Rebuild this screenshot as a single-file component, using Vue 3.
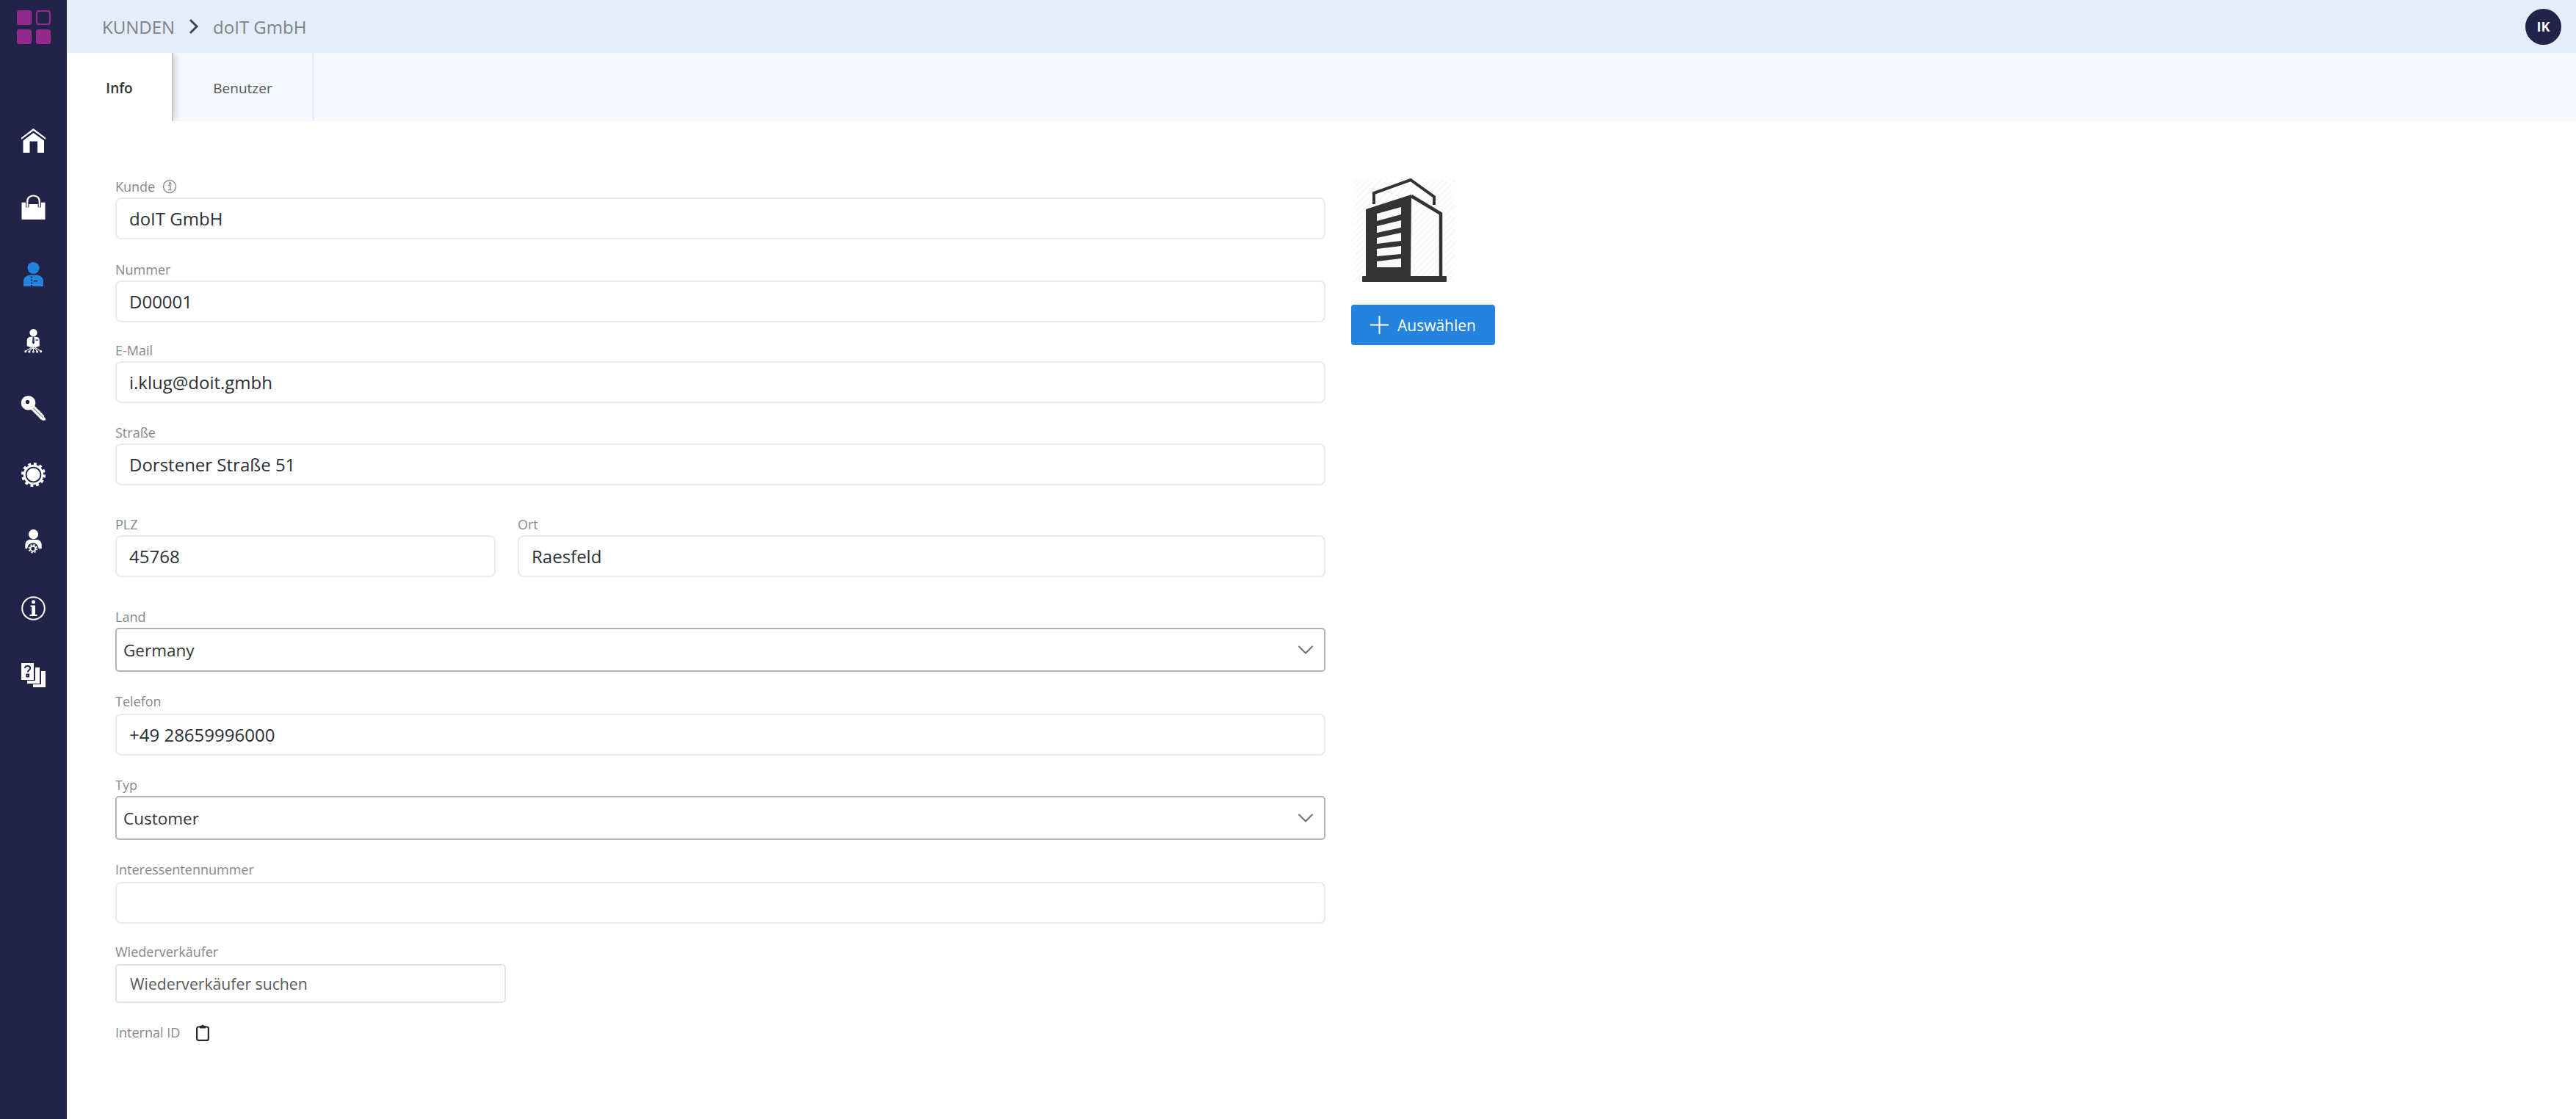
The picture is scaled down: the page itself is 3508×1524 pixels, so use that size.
<script setup>
const navIcons = ['home', 'bag', 'user', 'org', 'key', 'gear', 'usergear', 'info', 'docs']
</script>

<template>
  <div class="app">
    <aside class="side">
      <svg class="logo" viewBox="0 0 46 46">
        <rect x="0" y="0" width="20" height="20" rx="3" fill="#932a8c" />
        <rect x="27" y="1" width="18" height="18" rx="3" fill="none" stroke="#932a8c" stroke-width="2" />
        <rect x="0" y="26" width="20" height="20" rx="3" fill="#932a8c" />
        <rect x="26" y="26" width="20" height="20" rx="3" fill="#932a8c" />
      </svg>
      <nav class="nav">
        <div v-for="n in navIcons" :key="n" class="nav-item">
          <svg v-if="n === 'home'" viewBox="0 0 33 33" class="ico">
            <path d="M0 12.500 16.500 0 33 12.500V15L16.500 3 0 15z" fill="#fff" />
            <path d="M2.500 16.500 16.500 6 31 16.500V33H22V17.500H11.500V33H2.500z" fill="#fff" />
          </svg>
          <svg v-else-if="n === 'bag'" viewBox="0 0 33 34" class="ico">
            <path d="M0 10h33v24H0z" fill="#fff" />
            <path d="M8 17v-7h17v7" fill="none" stroke="#232349" stroke-width="4.500" />
            <path d="M8 17V8c0-10 17-10 17 0v9" fill="none" stroke="#fff" stroke-width="2.200" />
          </svg>
          <svg v-else-if="n === 'user'" viewBox="0 0 33 33" class="ico">
            <circle cx="16.500" cy="8" r="8" fill="#2583e0" />
            <path d="M3 33v-7c0-5 4-8 9.500-8.500h8c5.500 .5 9.500 3.500 9.500 8.500v7z" fill="#2583e0" />
            <path d="M13 19.500h2v2h-2zM13 23.500h2v2h-2zM13 27.500h2v2h-2zM13 31h2v2h-2zM17 25h5v1.500h-5z" fill="#232349" />
          </svg>
          <svg v-else-if="n === 'org'" viewBox="0 0 33 34" class="ico">
            <circle cx="16.500" cy="5.300" r="5.300" fill="#fff" />
            <path d="M7.500 24v-8c0-3 2.500-5 5.500-5h7c3 0 5 2 5 5v8l-4 1.500H11.500z" fill="#fff" />
            <path d="M15.500 11.500h2l.5 8-1.500 2-1.500-2zM19.500 15h4v1.200h-4z" fill="#232349" />
            <path d="M16.500 25.500V31M16.500 25.500 10.700 31M16.500 25.500 21.700 31M14 26 5.700 31M19 26 26.700 31" stroke="#fff" stroke-width="1.100" fill="none" />
            <circle cx="5.500" cy="31.500" r="1.600" fill="#fff" /><circle cx="10.700" cy="32" r="1.600" fill="#fff" />
            <circle cx="16.300" cy="32" r="1.600" fill="#fff" /><circle cx="21.700" cy="32" r="1.600" fill="#fff" />
            <circle cx="26.900" cy="31.500" r="1.600" fill="#fff" />
          </svg>
          <svg v-else-if="n === 'key'" viewBox="0 0 33 33" class="ico">
            <path d="M12 13 29 30" stroke="#fff" stroke-width="7" />
            <path d="M18 15.500l2.500 0 0 2.500 2.500 0 0 2.500 2.500 0 0 2.500 2.500 0 0 2.500 5 5.500v2.500h-5z" fill="#fff" />
            <path d="M15 15.500 29.500 30M12.500 18 25.500 31" stroke="#232349" stroke-width=".8" />
            <path fill-rule="evenodd" d="M9.500 0a9.800 9.800 0 1 1 0 19.600 9.800 9.800 0 0 1 0-19.600zM8.500 5.800a2.700 2.700 0 1 0 0 5.400 2.700 2.700 0 0 0 0-5.400z" fill="#fff" />
          </svg>
          <svg v-else-if="n === 'gear'" viewBox="0 0 33 33" class="ico">
            <circle cx="16.500" cy="16.500" r="14.700" fill="none" stroke="#fff" stroke-width="3.600" stroke-dasharray="3.850 3.850" />
            <circle cx="16.500" cy="16.500" r="12.300" fill="none" stroke="#fff" stroke-width="3" />
            <circle cx="16.500" cy="16.500" r="9" fill="#fff" />
          </svg>
          <svg v-else-if="n === 'usergear'" viewBox="0 0 33 34" class="ico">
            <circle cx="16.500" cy="6.800" r="6.800" fill="#fff" />
            <path d="M5 27v-5c0-5 3.500-7.500 7-7.500h9c3.500 0 7 2.500 7 7.500v5z" fill="#fff" />
            <circle cx="15.800" cy="27" r="8" fill="#232349" />
            <circle cx="15.800" cy="27" r="3.600" fill="none" stroke="#fff" stroke-width="2" />
            <circle cx="15.800" cy="27" r="5.500" fill="none" stroke="#fff" stroke-width="2" stroke-dasharray="2.160 2.160" />
          </svg>
          <svg v-else-if="n === 'info'" viewBox="0 0 33 33" class="ico">
            <circle cx="16.500" cy="16.500" r="15.300" fill="none" stroke="#fff" stroke-width="2" />
            <circle cx="16.500" cy="7.800" r="2.500" fill="#fff" />
            <path d="M12.500 12.500h6.500v12.500h2.500V27h-10v-2h2.700V14.500h-1.700z" fill="#fff" />
          </svg>
          <svg v-else viewBox="0 0 33 33" class="ico">
            <path d="M0 0h17v23H0z" fill="#fff" />
            <path d="M19 6h6v22H8v-4h11z" fill="#fff" />
            <path d="M27 11h6v22H16v-4h11z" fill="#fff" />
            <path d="M5 7c0-4 7-4 7 0 0 3-3 2.500-3.200 5.500M7.300 15.500h2.800v3H7.300z" fill="none" stroke="#232349" stroke-width="2" />
          </svg>
        </div>
      </nav>
    </aside>

    <main class="main">
      <header class="top">
        <div class="crumbs">
          <span>KUNDEN</span>
          <svg class="chev" viewBox="0 0 14 22"><path d="M2 2l9 9-9 9" fill="none" stroke="#3f4652" stroke-width="3" /></svg>
          <span>doIT GmbH</span>
        </div>
        <div class="avatar">IK</div>
      </header>

      <div class="tabs">
        <div class="tab active">Info</div>
        <div class="tab">Benutzer</div>
      </div>

      <div class="content">
        <section class="form">
          <div class="field f1">
            <div class="label">Kunde
              <svg class="tip" viewBox="0 0 20 20">
                <circle cx="10" cy="10" r="8.500" fill="none" stroke="#8a8f98" stroke-width="1.500" />
                <path d="M8 8.500h3v6h1.500M8 14.500h3M10 5h1.500v1.500H10z" fill="none" stroke="#8a8f98" stroke-width="1.400" />
              </svg>
            </div>
            <div class="input">doIT GmbH</div>
          </div>
          <div class="field f2"><div class="label">Nummer</div><div class="input">D00001</div></div>
          <div class="field f3"><div class="label">E-Mail</div><div class="input">i.klug@doit.gmbh</div></div>
          <div class="field f4"><div class="label">Straße</div><div class="input">Dorstener Straße 51</div></div>
          <div class="split">
            <div class="field"><div class="label">PLZ</div><div class="input">45768</div></div>
            <div class="field"><div class="label">Ort</div><div class="input">Raesfeld</div></div>
          </div>
          <div class="field f6">
            <div class="label">Land</div>
            <div class="select"><span>Germany</span>
              <svg class="caret" viewBox="0 0 22 14"><path d="M1.500 2 11 11.500 20.500 2" fill="none" stroke="#6f6f6f" stroke-width="2" /></svg>
            </div>
          </div>
          <div class="field f7"><div class="label">Telefon</div><div class="input">+49 28659996000</div></div>
          <div class="field f8">
            <div class="label">Typ</div>
            <div class="select"><span>Customer</span>
              <svg class="caret" viewBox="0 0 22 14"><path d="M1.500 2 11 11.500 20.500 2" fill="none" stroke="#6f6f6f" stroke-width="2" /></svg>
            </div>
          </div>
          <div class="field f9"><div class="label">Interessentennummer</div><div class="input"></div></div>
          <div class="field f10"><div class="label">Wiederverkäufer</div><div class="search">Wiederverkäufer suchen</div></div>
          <div class="idrow">
            <span class="label">Internal ID</span>
            <svg class="clip" viewBox="0 0 18 24">
              <rect x="1.100" y="4.500" width="15.800" height="18.400" rx="2.500" fill="none" stroke="#2a2a2a" stroke-width="2.200" />
              <path d="M5 6.500V3h2.200a2 2 0 0 1 3.600 0H13v3.500z" fill="#2a2a2a" />
            </svg>
          </div>
        </section>

        <section class="aside">
          <div class="pic">
            <svg viewBox="0 0 140 141" class="building">
              <path d="M29 35V20L79 2l32 23v11" fill="none" stroke="#333" stroke-width="4" />
              <path d="M18 42 80 22l-1 111H18z" fill="#333" />
              <path d="M80 24l40 24v85" fill="none" stroke="#333" stroke-width="4.500" />
              <rect x="13" y="133" width="115" height="8" rx="1" fill="#333" />
              <path d="M33 48l33-9v10l-33 9zM33 65l33-8v10l-33 7zM33 81l33-7v11l-33 4zM33 96l33-4v11l-33 3zM33 113l33-4v12H33z" fill="#fafafa" />
            </svg>
          </div>
          <button class="btn">
            <svg class="plus" viewBox="0 0 25 25"><path d="M12.500 0v25M0 12.500h25" stroke="#fff" stroke-width="2" /></svg>
            Auswählen
          </button>
        </section>
      </div>
    </main>
  </div>
</template>

<style scoped>
.app { display: flex; height: 1524px; font-family: "Open Sans", sans-serif; background: #fff; overflow: hidden; }
.side { width: 91px; flex: none; background: #232349; display: flex; flex-direction: column; align-items: center; padding-top: 14px; box-sizing: border-box; }
.logo { width: 46px; height: 46px; display: block; }
.nav { margin-top: 86px; display: flex; flex-direction: column; }
.nav-item { height: 91px; display: flex; align-items: center; justify-content: center; }
.ico { width: 33px; height: 33px; display: block; overflow: visible; }
.main { flex: 1; min-width: 0; display: flex; flex-direction: column; }
.top { height: 72px; background: #e3eefa; display: flex; align-items: center; justify-content: space-between; padding: 0 20px 0 48px; flex: none; box-sizing: border-box; }
.crumbs { display: flex; align-items: center; font-size: 24px; color: #7d8288; gap: 19px; }
.chev { width: 14px; height: 22px; display: block; }
.avatar { width: 49px; height: 49px; border-radius: 50%; background: #232349; color: #fff; font-size: 18px; font-weight: 700; display: flex; align-items: center; justify-content: center; }
.tabs { height: 93px; background: #f5f9fe; display: flex; flex: none; }
.tab { display: flex; align-items: center; justify-content: center; font-size: 19px; color: #555; box-sizing: border-box; width: 194px; padding-top: 2px; padding-left: 2px; border-right: 3px solid #e3eefa; }
.tab.active { width: 143px; padding-left: 0; background: #fff; color: #333; font-weight: 600; border-right: none; background-image: linear-gradient(to right, #fff 100%, #fff); position: relative; box-shadow: 2px 0 0 #c6c6c6, 9px 0 7px -2px #dadde2; clip-path: inset(0 -14px 0 0); }
.content { display: flex; gap: 35px; padding: 0 0 0 66px; }
.form { width: 1648px; display: flex; flex-direction: column; padding-top: 78px; }
.field { display: flex; flex-direction: column; }
.label { font-size: 18px; line-height: 22px; padding-bottom: 4px; color: #84888f; display: flex; align-items: center; gap: 10px; }
.input { height: 57px; box-sizing: border-box; border: 2px solid #e8ebf1; border-radius: 8px; font-size: 24px; color: #2b2f36; padding-left: 17px; display: flex; align-items: center; }
.select { height: 60px; box-sizing: border-box; border: 2px solid #b3b3b3; border-radius: 5px; font-size: 22.500px; color: #333; padding: 0 14px 0 9px; display: flex; align-items: center; justify-content: space-between; }
.search { width: 532px; height: 53px; box-sizing: border-box; border: 2px solid #dfe2ea; border-radius: 5px; font-size: 21.200px; color: #5a5a5a; padding-left: 18px; display: flex; align-items: center; }
.f2 { margin-top: 30px; }
.f3 { margin-top: 27px; }
.f4 { margin-top: 29px; }
.split { display: grid; grid-template-columns: 518px 1fr; gap: 30px; margin-top: 42px; }
.f6 { margin-top: 43px; }
.f7 { margin-top: 29px; }
.f8 { margin-top: 29px; }
.f9 { margin-top: 29px; }
.f10 { margin-top: 27px; }
.f7 .label, .f9 .label, .f10 .label { padding-bottom: 6px; }
.idrow { display: flex; align-items: center; gap: 22px; margin-top: 28px; }
.idrow .label { padding-bottom: 0; }
.tip { width: 20px; height: 20px; display: block; }
.caret { width: 22px; height: 14px; display: block; }
.clip { width: 18px; height: 24px; display: block; }
.aside { display: flex; flex-direction: column; padding-top: 78px; }
.pic { width: 140px; height: 141px; margin-left: 2px; background: repeating-linear-gradient(135deg, #fff 0 3px, #fafafa 3px 6px); }
.building { width: 140px; height: 141px; display: block; }
.btn { margin-top: 31px; width: 196px; height: 55px; border: none; border-radius: 4px; background: #2583e0; color: #fff; font: 400 21px "Open Sans", sans-serif; display: flex; align-items: center; justify-content: center; gap: 12px; padding: 0; }
.plus { width: 25px; height: 25px; display: block; }
</style>

<style>
html, body { margin: 0; padding: 0; background: #fff; }
</style>
